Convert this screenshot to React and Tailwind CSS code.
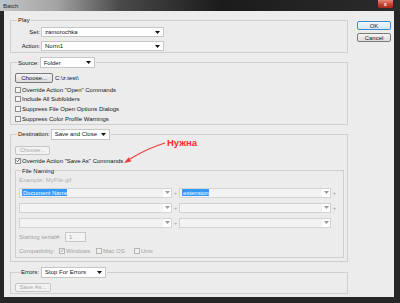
import React from 'react'

const Arrow = ({ gray }) => (
  <svg width="5" height="3" viewBox="0 0 5 3" className="shrink-0">
    <path d="M0 0h5L2.5 3z" fill={gray ? '#9a9a9a' : '#111'} />
  </svg>
)

function Select({ className, children }) {
  return (
    <div className={`flex items-center bg-white border border-[#c6c6c6] pl-[3px] pr-[3px] ${className}`}>
      <span className="flex-1 whitespace-nowrap overflow-hidden">{children}</span>
      <Arrow />
    </div>
  )
}

function NameSelect({ children }) {
  return (
    <div className="flex items-center h-[10px] flex-1 bg-[#f3f3f3] border border-[#d3d3d3]">
      <div className="flex-1 pl-[2px] flex items-center overflow-hidden">{children}</div>
      <div className="w-[8px] h-full bg-white flex items-center justify-center">
        <Arrow gray />
      </div>
    </div>
  )
}

function Check({ checked, disabled, children, className = '' }) {
  return (
    <div className={`flex items-center gap-[1px] ${className}`}>
      <span className={`w-[6px] h-[6px] shrink-0 border flex items-center justify-center ${disabled ? 'border-[#b5b5b5] bg-[#f2f2f2]' : 'border-[#8e8f8f] bg-[#f6f6f6]'}`}>
        {checked && (
          <svg width="5" height="5" viewBox="0 0 5 5">
            <path d="M0.7 2.6l1.2 1.3L4.4 0.9" fill="none" stroke={disabled ? '#8a8a8a' : '#333'} strokeWidth="0.9" />
          </svg>
        )}
      </span>
      <span className={`whitespace-nowrap ${disabled ? 'text-[#a2a2a2]' : ''}`}>{children}</span>
    </div>
  )
}

function Button({ className, disabled, children }) {
  return (
    <div
      className={`flex items-center justify-center rounded-[2px] border whitespace-nowrap ${
        disabled
          ? 'border-[#c6c6c6] bg-[#f2f2f2] text-[#a8a8a8]'
          : 'border-[#7a7a7a] bg-[linear-gradient(#f4f4f4,#dcdcdc)]'
      } ${className}`}
    >
      {children}
    </div>
  )
}

export default function App() {
  return (
    <div className="relative w-[400px] h-[303px] overflow-hidden flex flex-col bg-[#262626] text-[6px] leading-none text-[#151515] font-['Liberation_Sans',Arial,sans-serif]">
      {/* title bar */}
      <div className="h-[11px] shrink-0 flex items-start bg-[linear-gradient(90deg,#c4c4c4_0%,#a4a4a4_14%,#4a4a4a_30%,#1b1b1b_55%,#2c2c2c_100%)]">
        <span className="ml-[3px] mt-[3px] text-[#2b2b2b]">Batch</span>
        <div className="ml-auto mr-[7px] w-[15px] h-[8px] rounded-b-[2px] bg-[linear-gradient(#e98a7a,#c9412e_55%,#a82a1a)] flex items-center justify-center text-white text-[5px] font-bold">
          x
        </div>
      </div>

      {/* body */}
      <div className="flex-1 flex ml-[4px] mr-[6px] bg-[#ececec]">
        <div className="w-[338px] ml-[6px] flex flex-col">
          {/* Play */}
          <fieldset className="mt-[5px] border border-[#cfcfcf]">
            <legend className="ml-[6px] px-[1px] leading-[8px]">Play</legend>
            <div className="pt-[3px] pb-[1px] flex flex-col gap-[4px]">
              <div className="flex items-center">
                <span className="w-[29px] text-right">Set:</span>
                <Select className="ml-[1px] w-[123px] h-[10px]">zamorochka</Select>
              </div>
              <div className="flex items-center">
                <span className="w-[29px] text-right">Action:</span>
                <Select className="ml-[1px] w-[123px] h-[10px]">Norm1</Select>
              </div>
            </div>
          </fieldset>

          {/* Source */}
          <fieldset className="mt-[4px] border border-[#cfcfcf]">
            <legend className="ml-[6px] px-[1px]">
              <div className="flex items-center h-[11px]">
                <span>Source:</span>
                <Select className="ml-[1px] w-[55px] h-[11px]">Folder</Select>
              </div>
            </legend>
            <div className="pl-[4px] pt-[5px] flex flex-col">
              <div className="flex items-center">
                <Button className="w-[38px] h-[10px]">Choose...</Button>
                <span className="ml-[2px]">C:\z.test\</span>
              </div>
              <div className="mt-[2px] flex flex-col">
                <Check className="h-[9.67px]">Override Action "Open" Commands</Check>
                <Check className="h-[9.67px]">Include All Subfolders</Check>
                <Check className="h-[9.67px]">Suppress File Open Options Dialogs</Check>
                <Check className="h-[9.67px]">Suppress Color Profile Warnings</Check>
              </div>
            </div>
          </fieldset>

          {/* Destination */}
          <fieldset className="mt-[4px] border border-[#cfcfcf]">
            <legend className="ml-[6px] px-[1px]">
              <div className="flex items-center h-[11px]">
                <span>Destination:</span>
                <Select className="ml-[1px] w-[59px] h-[11px]">Save and Close</Select>
              </div>
            </legend>
            <div className="pl-[4px] pr-[3px] pt-[6px] pb-[3px] flex flex-col">
              <Button disabled className="w-[35px] h-[9px]">Choose...</Button>
              <Check checked className="mt-[1px] h-[10px]">Override Action "Save As" Commands</Check>

              <fieldset className="mt-[1px] border border-[#cfcfcf]">
                <legend className="ml-[5px] px-[1px] leading-[8px]">File Naming</legend>
                <div className="pl-[3px] pb-[1px] flex flex-col">
                  <div className="mt-[1px] h-[9px] flex items-center text-[#b0b0b0]">Example: MyFile.gif</div>
                  <div className="mt-[3px] flex flex-col gap-[5px]">
                    <div className="flex items-center">
                      <div className="w-[153px] flex">
                        <NameSelect>
                          <span className="bg-[#3399ff] text-white px-[1px] h-[7px] flex items-center shrink-0 w-[45px] whitespace-nowrap overflow-hidden">Document Name</span>
                        </NameSelect>
                      </div>
                      <span className="w-[7px] text-center text-[#a8a8a8]">+</span>
                      <div className="w-[152px] flex">
                        <NameSelect>
                          <span className="bg-[#3399ff] text-white px-[1px] h-[7px] flex items-center shrink-0 w-[27px] whitespace-nowrap overflow-hidden">extension</span>
                        </NameSelect>
                      </div>
                      <span className="w-[7px] text-center text-[#a8a8a8]">+</span>
                    </div>
                    <div className="flex items-center">
                      <div className="w-[153px] flex"><NameSelect /></div>
                      <span className="w-[7px] text-center text-[#a8a8a8]">+</span>
                      <div className="w-[152px] flex"><NameSelect /></div>
                      <span className="w-[7px] text-center text-[#a8a8a8]">+</span>
                    </div>
                    <div className="flex items-center">
                      <div className="w-[153px] flex"><NameSelect /></div>
                      <span className="w-[7px] text-center text-[#a8a8a8]">+</span>
                      <div className="w-[152px] flex"><NameSelect /></div>
                    </div>
                  </div>
                  <div className="mt-[4px] flex items-center text-[#a2a2a2]">
                    <span className="w-[46px]">Starting serial#:</span>
                    <div className="w-[21px] h-[10px] border border-[#c8c8c8] bg-[#f3f3f3] pl-[3px] flex items-center">1</div>
                  </div>
                  <div className="mt-[4px] h-[10px] flex items-center text-[#a2a2a2]">
                    <span className="w-[40px]">Compatibility:</span>
                    <Check checked disabled className="w-[37px]">Windows</Check>
                    <Check disabled className="w-[38px]">Mac OS</Check>
                    <Check disabled>Unix</Check>
                  </div>
                </div>
              </fieldset>
            </div>
          </fieldset>

          {/* Errors */}
          <fieldset className="mt-[5px] border border-[#cfcfcf]">
            <legend className="ml-[9px] px-[1px]">
              <div className="flex items-center h-[11px]">
                <span>Errors:</span>
                <Select className="ml-[2px] w-[65px] h-[11px]">Stop For Errors</Select>
              </div>
            </legend>
            <div className="pl-[4px] pt-[5px] pb-[1px]">
              <Button disabled className="w-[36px] h-[9px]">Save As...</Button>
            </div>
          </fieldset>
        </div>

        {/* buttons */}
        <div className="ml-[9px] w-[34px] pt-[10px] flex flex-col gap-[3px]">
          <div className="h-[9px] rounded-[2px] border border-[#3d8ad0] bg-[linear-gradient(#f2f8fc,#d6e6f2)] flex items-center justify-center">OK</div>
          <Button className="h-[9px]">Cancel</Button>
        </div>
      </div>
      <div className="h-[6px] shrink-0" />

      {/* annotation */}
      <span className="absolute left-[167px] top-[138px] text-[9.5px] font-bold leading-none text-[#ff2b2b]">Нужна</span>
      <svg className="absolute left-[120px] top-[138px]" width="50" height="28" viewBox="0 0 50 28">
        <path d="M45 5Q28 10 10 21" fill="none" stroke="#f03a3a" strokeWidth="1.3" />
        <path d="M4 25L11.3 23.4L8.7 19.2Z" fill="#f03a3a" />
      </svg>
    </div>
  )
}
